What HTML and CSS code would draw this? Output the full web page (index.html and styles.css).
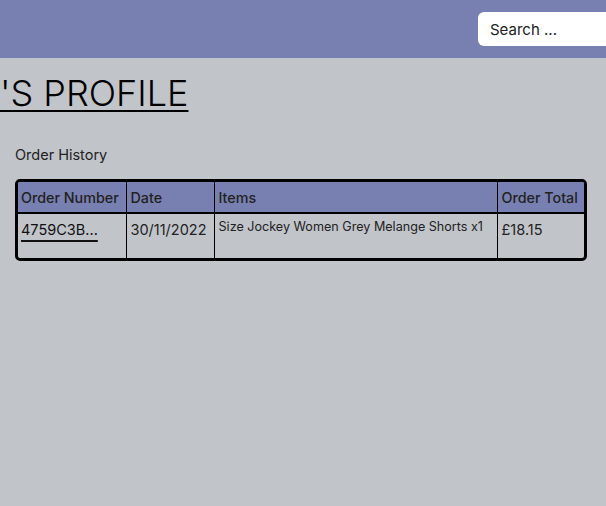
FILE: index.html
```html
<!DOCTYPE html>
<html>
<head>
<meta charset="utf-8">
<link rel="stylesheet" href="styles.css">
</head>
<body>
<header class="topbar">
  <input class="search" type="text" placeholder="Search ...">
</header>
<main class="content">
  <h1 class="title">'S PROFILE</h1>
  <p class="section-label">Order History</p>
  <div class="table-wrap">
    <table class="orders">
      <colgroup>
        <col class="c1"><col class="c2"><col class="c3"><col class="c4">
      </colgroup>
      <thead>
        <tr><th>Order Number</th><th>Date</th><th>Items</th><th>Order Total</th></tr>
      </thead>
      <tbody>
        <tr>
          <td><a class="order-link" href="#">4759C3B...</a></td>
          <td>30/11/2022</td>
          <td class="items">Size Jockey Women Grey Melange Shorts x1</td>
          <td>£18.15</td>
        </tr>
      </tbody>
    </table>
  </div>
</main>
</body>
</html>
```
FILE: styles.css
```css
html, body {
  margin: 0;
  padding: 0;
}
body {
  background: #c1c4c9;
  font-family: Inter, "Noto Sans", sans-serif;
  color: #222;
  width: 606px;
  height: 506px;
  overflow: hidden;
}
.topbar {
  height: 58px;
  background: #7780b0;
  display: flex;
  justify-content: flex-end;
  align-items: center;
}
.search {
  box-sizing: border-box;
  width: 140px;
  height: 34px;
  margin-right: -12px;
  border: none;
  border-radius: 6px;
  background: #fff;
  padding: 0 12px;
  font-family: Inter, sans-serif;
  font-size: 15px;
  outline: none;
}
.search::placeholder {
  color: #222;
}
.content {
  padding: 0 19px 0 15px;
}
.title {
  margin: 12px 0 0 -15px;
  font-size: 36px;
  font-weight: 300;
  line-height: 46px;
  color: #000;
  text-decoration: underline;
  text-decoration-thickness: 2px;
  text-underline-offset: 4px;
}
.section-label {
  margin: 29px 0 0;
  font-size: 14.5px;
  line-height: 20px;
  color: #222;
}
.table-wrap {
  box-sizing: border-box;
  margin-top: 14px;
  width: 572px;
  border: 3px solid #000;
  border-radius: 5px;
  overflow: hidden;
}
.orders {
  width: 100%;
  border-collapse: collapse;
  table-layout: fixed;
}
.c1 { width: 108px; }
.c2 { width: 88px; }
.c3 { width: 283px; }
.c4 { width: auto; }
.orders th {
  box-sizing: border-box;
  background: #7780b0;
  text-align: left;
  font-size: 14.3px;
  font-weight: 500;
  color: #222;
  height: 31px;
  padding: 1px 3px 0 4px;
  border-left: 1px solid #000;
  border-bottom: 2px solid #000;
  white-space: nowrap;
}
.orders td {
  vertical-align: top;
  font-size: 14.5px;
  height: 45px;
  box-sizing: border-box;
  padding: 7px 3px 0 4px;
  border-left: 1px solid #000;
  color: #222;
}
.orders th:first-child, .orders td:first-child {
  border-left: none;
  padding-left: 3px;
}
.orders td.items {
  font-size: 12.6px;
  padding-top: 5px;
}
.order-link {
  color: #111;
  text-decoration: underline;
  text-decoration-thickness: 2px;
  text-underline-offset: 5px;
}
```
